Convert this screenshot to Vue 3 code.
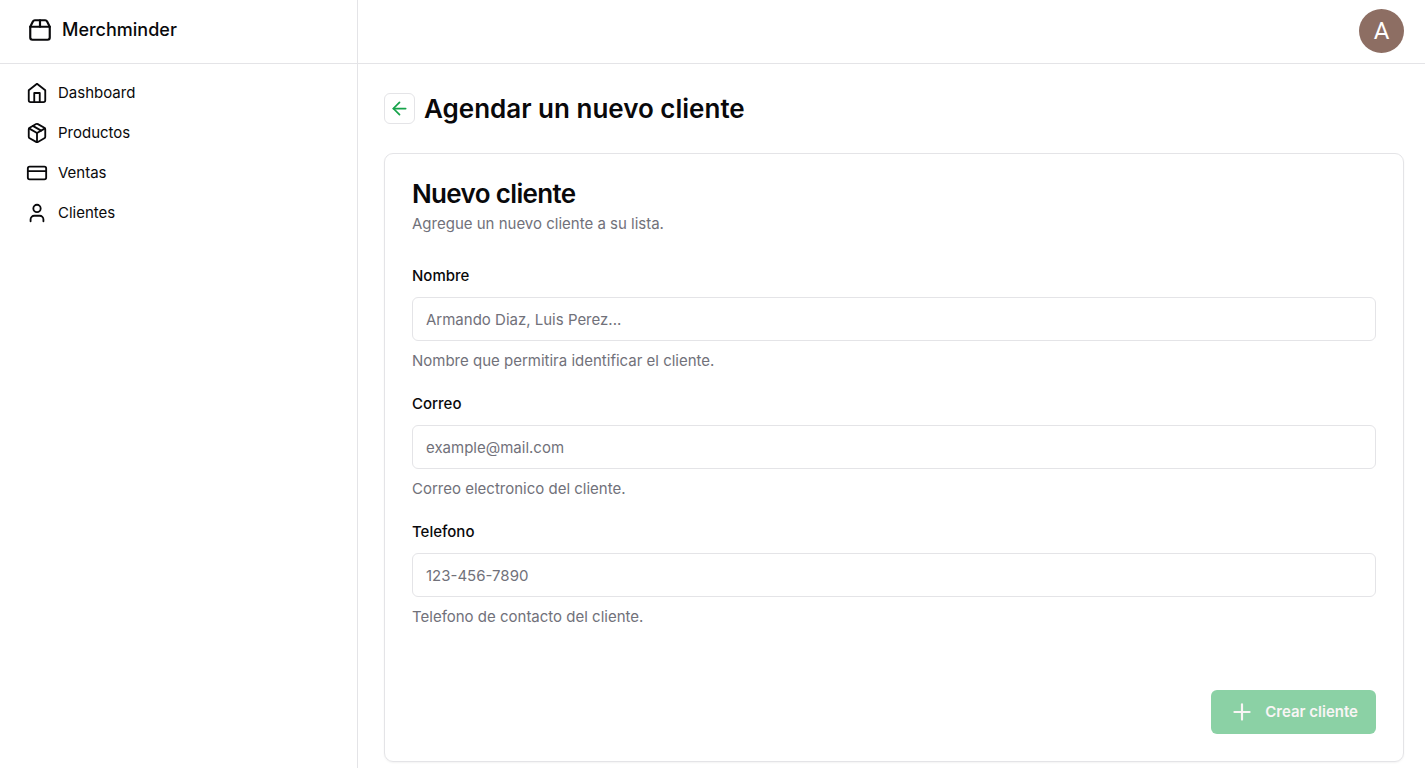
<script setup>
import { reactive } from 'vue'

const links = [
  { label: 'Dashboard', paths: ['m3 9 9-7 9 7v11a2 2 0 0 1-2 2H5a2 2 0 0 1-2-2z', 'M9 22V12h6v10'] },
  {
    label: 'Productos',
    paths: [
      'm7.5 4.27 9 5.15',
      'M21 8a2 2 0 0 0-1-1.73l-7-4a2 2 0 0 0-2 0l-7 4A2 2 0 0 0 3 8v8a2 2 0 0 0 1 1.73l7 4a2 2 0 0 0 2 0l7-4A2 2 0 0 0 21 16Z',
      'm3.3 7 8.7 5 8.7-5',
      'M12 22V12',
    ],
  },
  {
    label: 'Ventas',
    paths: ['M4 5h16a2 2 0 0 1 2 2v10a2 2 0 0 1-2 2H4a2 2 0 0 1-2-2V7a2 2 0 0 1 2-2z', 'M2 10h20'],
  },
  {
    label: 'Clientes',
    paths: ['M19 21v-2a4 4 0 0 0-4-4H9a4 4 0 0 0-4 4v2', 'M12 3a4 4 0 1 1 0 8a4 4 0 1 1 0-8z'],
  },
]

const fields = [
  { id: 'nombre', label: 'Nombre', type: 'text', placeholder: 'Armando Diaz, Luis Perez...', help: 'Nombre que permitira identificar el cliente.' },
  { id: 'correo', label: 'Correo', type: 'email', placeholder: 'example@mail.com', help: 'Correo electronico del cliente.' },
  { id: 'telefono', label: 'Telefono', type: 'tel', placeholder: '123-456-7890', help: 'Telefono de contacto del cliente.' },
]

const form = reactive({ nombre: '', correo: '', telefono: '' })
</script>

<template>
  <div class="shell">
    <aside class="sidebar">
      <div class="brand-bar">
        <a class="brand" href="#">
          <svg class="icon brand-icon" viewBox="0 0 24 24" aria-hidden="true">
            <path d="M3 9h18v10a2 2 0 0 1-2 2H5a2 2 0 0 1-2-2V9Z" />
            <path d="m3 9 2.45-4.9A2 2 0 0 1 7.24 3h9.52a2 2 0 0 1 1.8 1.1L21 9" />
            <path d="M12 3v6" />
          </svg>
          <span>Merchminder</span>
        </a>
      </div>
      <nav class="nav">
        <a v-for="link in links" :key="link.label" class="nav-link" href="#">
          <svg class="icon nav-icon" viewBox="0 0 24 24" aria-hidden="true">
            <path v-for="d in link.paths" :key="d" :d="d" />
          </svg>
          <span>{{ link.label }}</span>
        </a>
      </nav>
    </aside>

    <div class="content">
      <header class="topbar">
        <button class="avatar" type="button" aria-label="Cuenta">A</button>
      </header>

      <main class="main">
        <div class="page-head">
          <button class="back" type="button" aria-label="Volver">
            <svg class="icon back-icon" viewBox="0 0 24 24" aria-hidden="true">
              <path d="m12 19-7-7 7-7" />
              <path d="M19 12H5" />
            </svg>
          </button>
          <h1>Agendar un nuevo cliente</h1>
        </div>

        <form class="card" @submit.prevent>
          <div class="card-head">
            <h2>Nuevo cliente</h2>
            <p class="muted">Agregue un nuevo cliente a su lista.</p>
          </div>
          <div class="fields">
            <div v-for="field in fields" :key="field.id" class="field">
              <label :for="field.id">{{ field.label }}</label>
              <input
                :id="field.id"
                v-model="form[field.id]"
                :type="field.type"
                :placeholder="field.placeholder"
                :aria-describedby="field.id + '-help'"
              />
              <p :id="field.id + '-help'" class="muted">{{ field.help }}</p>
            </div>
          </div>
          <div class="card-foot">
            <button class="submit" type="submit" disabled>
              <svg class="icon submit-icon" viewBox="0 0 24 24" aria-hidden="true">
                <path d="M5 12h14" />
                <path d="M12 5v14" />
              </svg>
              <span>Crear cliente</span>
            </button>
          </div>
        </form>
      </main>
    </div>
  </div>
</template>

<style>
body {
  margin: 0;
  background: #ffffff;
}
</style>

<style scoped>
.shell {
  display: grid;
  grid-template-columns: 358px minmax(0, 1fr);
  min-height: 100vh;
  font-family: Inter, "Liberation Sans", sans-serif;
  font-size: 15px;
  line-height: 22px;
  color: #09090b;
}

.shell *,
.shell {
  box-sizing: border-box;
}

h1,
h2,
p {
  margin: 0;
}

a {
  color: inherit;
  text-decoration: none;
}

button,
input {
  font: inherit;
}

.icon {
  flex: none;
  fill: none;
  stroke: currentColor;
  stroke-width: 2;
  stroke-linecap: round;
  stroke-linejoin: round;
}

.sidebar {
  border-right: 1px solid #e4e4e7;
}

.brand-bar,
.topbar {
  display: flex;
  align-items: center;
  height: 64px;
  border-bottom: 1px solid #e4e4e7;
}

.brand-bar {
  padding: 0 27px 3px;
}

.brand {
  display: flex;
  align-items: center;
  gap: 9px;
  font-size: 18px;
  font-weight: 500;
}

.brand-icon {
  width: 26px;
  height: 26px;
}

.nav {
  display: flex;
  flex-direction: column;
  padding: 9px 18px;
}

.nav-link {
  display: flex;
  align-items: center;
  gap: 10px;
  padding: 9px 8px;
}

.nav-icon {
  width: 22px;
  height: 22px;
}

.topbar {
  justify-content: flex-end;
  padding: 0 21px 1px;
}

.avatar {
  width: 45px;
  height: 44px;
  padding: 0;
  border: 0;
  border-radius: 50%;
  background: #8d6e63;
  color: #ffffff;
  font-family: Roboto, sans-serif;
  font-size: 24px;
}

.main {
  padding: 26px 21px 6px 26px;
}

.page-head {
  display: flex;
  align-items: center;
  gap: 9px;
  margin-bottom: 26px;
}

.back {
  display: grid;
  place-items: center;
  width: 31px;
  height: 31px;
  padding: 0;
  border: 1px solid #e4e4e7;
  border-radius: 6px;
  background: #ffffff;
  color: #16a34a;
}

.back-icon {
  width: 21px;
  height: 21px;
}

h1 {
  font-size: 26px;
  line-height: 37px;
  font-weight: 600;
}

.card {
  padding: 26px 27px 27px;
  border: 1px solid #e4e4e7;
  border-radius: 9px;
  box-shadow: 0 1px 2px rgba(0, 0, 0, 0.05);
}

h2 {
  font-size: 26px;
  line-height: 27px;
  font-weight: 600;
  letter-spacing: -0.025em;
}

.muted {
  color: #71717a;
}

.card-head {
  display: grid;
  gap: 6px;
  margin-bottom: 30px;
}

.fields {
  display: grid;
  gap: 21px;
}

.field {
  display: grid;
  gap: 9px;
}

.field label {
  padding-bottom: 1px;
  font-weight: 500;
}

.field input {
  width: 100%;
  height: 44px;
  padding: 0 13px;
  border: 1px solid #e4e4e7;
  border-radius: 6px;
  background: transparent;
  color: inherit;
}

.field input::placeholder {
  color: #71717a;
  opacity: 1;
}

.card-foot {
  display: flex;
  justify-content: flex-end;
  margin-top: 62px;
}

.submit {
  display: flex;
  align-items: center;
  gap: 10px;
  height: 44px;
  padding: 0 18px;
  border: 0;
  border-radius: 6px;
  background: #8bd1a5;
  color: #f9f5f5;
  font-weight: 600;
}

.submit-icon {
  width: 26px;
  height: 26px;
}
</style>
